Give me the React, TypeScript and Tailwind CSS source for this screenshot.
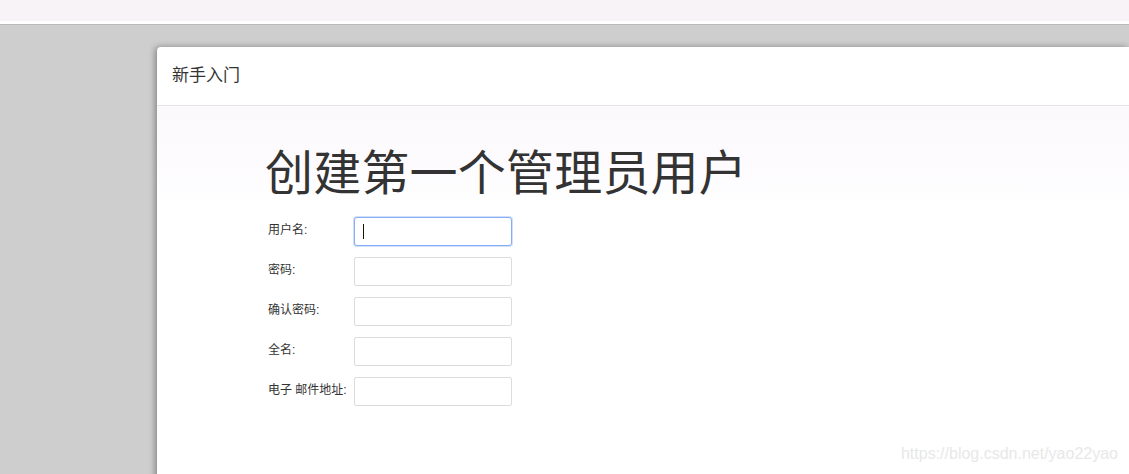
const fields = [
  { label: "用户名:", focused: true },
  { label: "密码:" },
  { label: "确认密码:" },
  { label: "全名:" },
  { label: "电子 邮件地址:" },
];

export default function App() {
  return (
    <div className="relative w-[1129px] h-[474px] overflow-hidden bg-[#cecece] text-[#333] font-['Liberation_Sans','Noto_Sans_CJK_SC',sans-serif]">
      {/* browser chrome strip */}
      <div className="h-[21px] bg-[#f7f3f7]" />
      <div className="h-[3px] bg-white" />
      <div className="h-px bg-[#b9b9b9]" />

      <div className="pl-[157px] pt-[22px]">
        <div className="h-[440px] bg-white rounded-tl-[4px] shadow-[-2px_0_6px_rgba(0,0,0,0.35)]">
          <div className="h-[59px] flex items-center pl-[15px] border-b border-[#e5e5e5] text-[17px]">
            新手入门
          </div>

          <div className="bg-[linear-gradient(to_bottom,#fcf9fd,#fdfbfe_60px,#ffffff_100px)] pl-[108px] pt-[38px]">
            <h1 className="text-[48px] leading-[60px] font-normal tracking-[0.2px] text-[#333]">
              创建第一个管理员用户
            </h1>

            <div className="mt-[13px] flex flex-col gap-[12px]">
              {fields.map((f) => (
                <div key={f.label} className="flex items-center h-[28px]">
                  <div className="w-[89px] pl-[3px] text-[12px] leading-none -mt-[3px] whitespace-nowrap">
                    {f.label}
                  </div>
                  <div
                    className={
                      f.focused
                        ? "relative w-[158px] h-[29px] rounded-[3px] border border-[#86aef3] bg-white shadow-[0_0_0_1px_rgba(150,186,245,0.45)]"
                        : "w-[158px] h-[29px] rounded-[2px] border border-[#dcdcdc] bg-white"
                    }
                  >
                    {f.focused && (
                      <div className="absolute left-[8px] top-[6px] w-px h-[15px] bg-[#111]" />
                    )}
                  </div>
                </div>
              ))}
            </div>
          </div>
        </div>
      </div>

      <div className="absolute right-[11px] bottom-[8px] text-[16px] text-[#e8e8e8] font-['Liberation_Sans',sans-serif]">
        https://blog.csdn.net/yao22yao
      </div>
    </div>
  );
}
